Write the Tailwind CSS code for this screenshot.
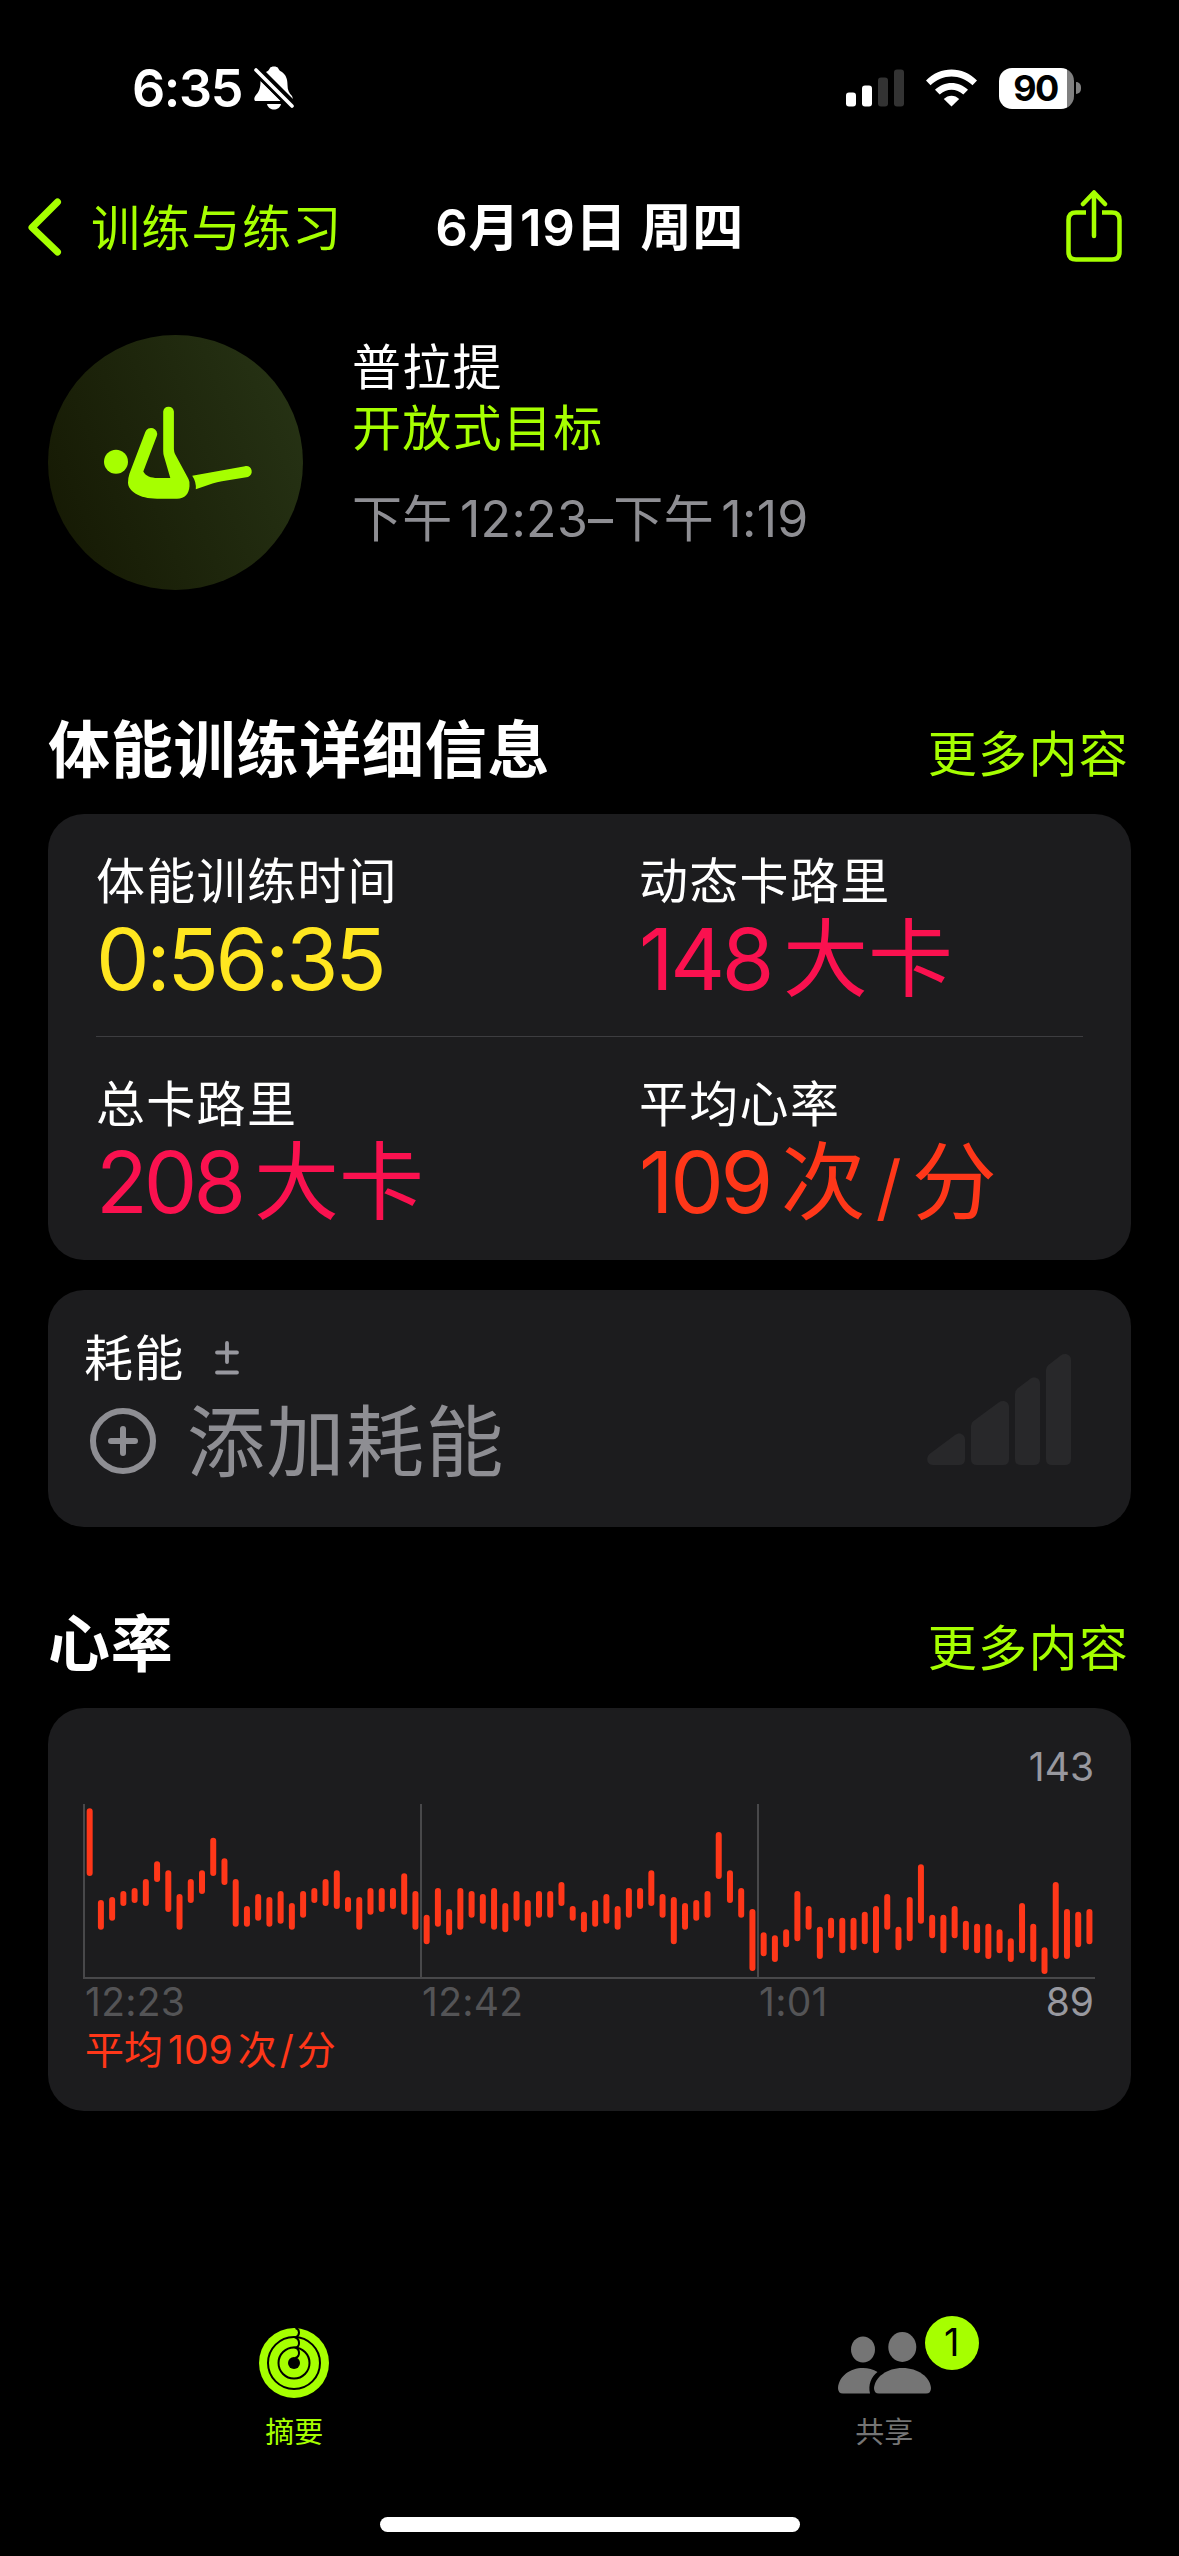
<!DOCTYPE html>
<html lang="zh-CN">
<head>
  <meta charset="UTF-8">
  <title>体能训练</title>
  <script src="https://cdn.jsdelivr.net/npm/@tailwindcss/browser@4"></script>
</head>
<body class="bg-black text-white font-['Inter','Noto_Sans_CJK_SC',sans-serif] w-[1179px] h-[2556px] overflow-hidden flex flex-col">

  <!-- Status bar -->
  <div class="h-44 shrink-0 flex items-center justify-between pl-[132px] pr-[98px]">
    <div class="flex items-center gap-[11px]">
      <span class="text-[52px] leading-[54px] pt-[2px] font-semibold tracking-[-1.4px] w-[111px] whitespace-nowrap">6:35</span>
      <svg class="w-10 h-11" viewBox="0 0 40 44" fill="#fff">
        <path d="M12 6C14 5 15 4 16 2C17 0 23 0 24 2C25 4 26 5 28 6C32 9 33.500 13 33.500 19C33.500 24 35 27 38 30L39 33Z"/>
        <path d="M6.500 15L27 35H2C-.5 35 0 31 2 29C5 26 6.500 22 6.500 15Z"/>
        <path d="M13 38H27C26 42 23 43.500 20 43.500S14 42 13 38Z"/>
        <path d="M2 4L38 40" stroke="#000" stroke-width="9"/>
        <path d="M2 4L38 40" stroke="#fff" stroke-width="3.600" stroke-linecap="round"/>
      </svg>
    </div>
    <div class="flex items-center">
      <svg class="w-[58px] h-[38px]" viewBox="0 0 58 38">
        <rect x="0" y="23.500" width="10" height="14" rx="3" fill="#fff"/>
        <rect x="16" y="16.500" width="10" height="21" rx="3" fill="#fff"/>
        <rect x="32" y="8.500" width="10" height="29" rx="3" fill="#333"/>
        <rect x="48" y="0.500" width="10" height="37" rx="3" fill="#333"/>
      </svg>
      <svg class="w-[51px] h-[38px] ml-[22px]" viewBox="0 0 51 38" fill="#fff">
        <path d="M0 11.500C14-3.300 37-3.300 51 11.500L46.500 16.200C34.500 4.500 16.500 4.500 4.500 16.200Z"/>
        <path d="M9 20.800C18 11.600 33 11.600 42 20.800L37.300 25.600C30.500 19 20.500 19 13.700 25.600Z"/>
        <path d="M17.800 30C22 25.500 29 25.500 33.200 30L25.500 37.500Z"/>
      </svg>
      <div class="flex items-center ml-[22px] gap-[2px]">
        <div class="w-[75px] h-[41px] rounded-[13px] bg-[linear-gradient(to_right,#fff_68px,#808080_68px)] text-black text-[36px] leading-[41px] font-bold tracking-[-1.5px] pr-[2px] text-center">90</div>
        <div class="w-[5px] h-3 rounded-r-full bg-[#808080]"></div>
      </div>
    </div>
  </div>

  <!-- Navigation -->
  <div class="h-[102px] shrink-0 grid grid-cols-[1fr_auto_1fr] items-center px-7">
    <div class="flex items-center text-[#a6ff00] text-[49px] leading-none tracking-[1.300px]">
      <svg class="w-[34px] h-[58px] mr-[29px]" viewBox="0 0 34 58" fill="none" stroke="#a6ff00" stroke-width="7" stroke-linecap="round" stroke-linejoin="round">
        <path d="M29.500 4L4 29.500L29.500 54"/>
      </svg>
      <span class="pt-[2px]">训练与练习</span>
    </div>
    <h1 class="text-[51px] leading-none font-semibold tracking-[.6px] whitespace-pre">6月19日 周四</h1>
    <svg class="w-[58px] h-[74px] justify-self-end mr-7" viewBox="0 0 58 74" fill="none" stroke="#a6ff00" stroke-width="4.500">
      <path d="M21 22.500H11Q3.500 22.500 3.500 30V62Q3.500 69.500 11 69.500H47Q54.500 69.500 54.500 62V30Q54.500 22.500 47 22.500H37"/>
      <path d="M29 46V3M18 14L29 2.500L40 14" stroke-linecap="round" stroke-linejoin="round"/>
    </svg>
  </div>

  <!-- Workout summary -->
  <div class="mt-[57px] ml-12 h-[255px] shrink-0 flex">
    <svg class="w-[255px] h-[255px]" viewBox="0 0 255 255">
      <defs>
        <linearGradient id="disc" x1="0" y1=".7" x2="1" y2=".3">
          <stop offset="0" stop-color="#161a04"/>
          <stop offset="1" stop-color="#263214"/>
        </linearGradient>
      </defs>
      <circle cx="127.500" cy="127.500" r="127.500" fill="url(#disc)"/>
      <g fill="#a6ff00">
        <circle cx="68" cy="126.700" r="12"/>
        <path d="M115.200 76.500A5.400 5.400 0 0 1 125.900 76.500V114Q126 116.500 127 119L140.500 144Q142 147 141.500 151C141 159 137 163.700 129 163.700H109C91 163.700 80 156 80 147.500Q80 143 81.500 138.500L97.300 97A5.900 5.900 0 0 1 108.800 101L95.300 136.500C97.500 141 103 143 109.500 143H122.300L115.900 121Q115.200 118.500 115.200 116Z"/>
        <path d="M144.200 140.700L197 131.200C204 130 206.500 139.500 200 141.900L174 146.200Q169 147 164.500 148.600L147.800 154.300Q148.500 147 144.200 140.700Z"/>
      </g>
    </svg>
    <div class="ml-[49px] pt-[2px] text-[49px] tracking-[1.300px]">
      <div class="leading-[61px]">普拉提</div>
      <div class="leading-[61px] text-[#a6ff00]">开放式目标</div>
      <div class="mt-[30px] leading-[61px] text-[#8e8e93] text-[50px] tracking-[.3px] [word-spacing:-7px] whitespace-nowrap">下午 12:23–下午 1:19</div>
    </div>
  </div>

  <!-- Workout details -->
  <div class="mt-[125px] h-[70px] shrink-0 flex items-center justify-between pl-12 pr-[50px]">
    <h2 class="text-[62px] leading-[70px] font-bold tracking-[.8px] pt-px">体能训练详细信息</h2>
    <a class="text-[49px] leading-[70px] tracking-[1.300px] text-[#a6ff00] pt-[9px]">更多内容</a>
  </div>
  <div class="mt-[29px] mx-12 h-[446px] shrink-0 rounded-[36px] bg-[#1c1c1e] px-12">
    <div class="grid grid-cols-[543px_1fr] h-[223px] pt-[38px] border-b border-[#3d3d40]">
      <div>
        <div class="text-[49px] leading-[60px] tracking-[1.300px]">体能训练时间</div>
        <div class="text-[85px] leading-[95px] tracking-[-3.4px] text-[#ffe620]">0:56:35</div>
      </div>
      <div>
        <div class="text-[49px] leading-[60px] tracking-[1.300px]">动态卡路里</div>
        <div class="text-[85px] leading-[95px] text-[#fa114f]"><span class="tracking-[-3.4px]">148</span><span class="ml-3">大卡</span></div>
      </div>
    </div>
    <div class="grid grid-cols-[543px_1fr] h-[223px] pt-[38px]">
      <div>
        <div class="text-[49px] leading-[60px] tracking-[1.300px]">总卡路里</div>
        <div class="text-[85px] leading-[95px] text-[#fa114f]"><span class="tracking-[-4px]">208</span><span class="ml-3">大卡</span></div>
      </div>
      <div>
        <div class="text-[49px] leading-[60px] tracking-[1.300px]">平均心率</div>
        <div class="text-[85px] leading-[95px] text-[#ff3719]"><span class="tracking-[-3.4px]">109</span><span class="ml-[11px]">次</span><span class="text-[72px] mx-2.5">/</span><span>分</span></div>
      </div>
    </div>
  </div>

  <!-- Effort -->
  <div class="mt-[30px] mx-12 h-[237px] shrink-0 rounded-[36px] bg-[#1c1c1e] pl-9 pr-[60px] flex items-center justify-between">
    <div>
      <div class="flex items-center gap-[30px] text-[49px] leading-[64px] tracking-[1.300px]">
        <span class="pt-[2px]">耗能</span>
        <svg class="w-6 h-[34px]" viewBox="0 0 24 34" stroke="#98989f" stroke-width="3.800" stroke-linecap="round">
          <path d="M12 2V21M2 11.500H22M2 31.500H22"/>
        </svg>
      </div>
      <div class="flex items-center text-[#8e8e93]">
        <svg class="w-[68px] h-[68px] ml-[5px] mr-[30px]" viewBox="0 0 68 68" fill="none" stroke="#8e8e93" stroke-width="6" stroke-linecap="round">
          <circle cx="34" cy="33" r="30"/>
          <path d="M34 21V45M22 33H46"/>
        </svg>
        <span class="text-[78px] leading-[100px] tracking-[1.500px] pt-[2px]">添加耗能</span>
      </div>
    </div>
    <svg class="w-36 h-28" viewBox="0 0 144 112" fill="#28282a">
      <path d="M2.500 101L28 82C32 78.500 38 81 38 86.500V106Q38 112 32 112H6C0 112-1.500 105 2.500 101Z"/>
      <path d="M46.500 68L72 49.300C76 46.300 82 48.500 82 54V106Q82 112 76 112H50Q44 112 44 106V73Q44 70 46.500 68Z"/>
      <path d="M90.500 35.500L103 26C107 23 113 25 113 30.500V106Q113 112 107 112H94Q88 112 88 106V41Q88 37.500 90.500 35.500Z"/>
      <path d="M121.500 12L134 2.300C138-.7 144 1.500 144 7V106Q144 112 138 112H125Q119 112 119 106V17Q119 14 121.500 12Z"/>
    </svg>
  </div>

  <!-- Heart rate -->
  <div class="mt-[82px] h-[70px] shrink-0 flex items-center justify-between pl-12 pr-[50px]">
    <h2 class="text-[62px] leading-[70px] font-bold tracking-[.8px] pt-px">心率</h2>
    <a class="text-[49px] leading-[70px] tracking-[1.300px] text-[#a6ff00] pt-[9px]">更多内容</a>
  </div>
  <div class="mt-[29px] mx-12 h-[403px] shrink-0 rounded-[36px] bg-[#1c1c1e] pt-9 pl-[35px] pr-9 text-[39px] leading-[46px]">
    <div class="text-right text-[#98989f] pr-px">143</div>
    <svg id="chart" class="mt-[14px] w-[1012px] h-[175px]" viewBox="0 222 3036 525">
      <path d="M3 222V744M1014 222V744M2025 222V744M0 744H3036" stroke="#48484a" stroke-width="6"/>
      <path id="bars" stroke="#ff3719" stroke-width="18" stroke-linecap="round"/>
    </svg>
    <div class="grid grid-cols-[337px_337px_1fr_auto] pl-[2px] pr-px text-[#545456]">
      <span class="tracking-[.3px]">12:23</span>
      <span class="tracking-[.3px]">12:42</span>
      <span class="tracking-[.3px]">1:01</span>
      <span class="text-[#98989f]">89</span>
    </div>
    <div class="pl-[2px] mt-[2px] text-[#ff3719] flex">平均<span class="ml-[5px]">109</span><span class="ml-[5px]">次</span><span class="mx-[3px]">/</span>分</div>
  </div>

  <!-- Tab bar -->
  <div class="mt-auto h-[240px] shrink-0 grid grid-cols-2 text-[29px] leading-9">
    <div class="flex flex-col items-center pt-3 pr-px text-[#a6ff00]">
      <svg class="w-[70px] h-[70px]" viewBox="0 0 70 70" fill="none">
        <circle cx="35" cy="35" r="35" fill="#a6ff00"/>
        <circle cx="35" cy="35" r="26" stroke="#000" stroke-width="2"/>
        <circle cx="35" cy="35" r="15.500" stroke="#000" stroke-width="2"/>
        <circle cx="35" cy="35" r="6" fill="#000"/>
        <path d="M36.500 0Q40 1 40 4.500T36.500 9.500Q40 11 40 15T36.500 19.500Q40 21 40 25T36 30" stroke="#000" stroke-width="2"/>
      </svg>
      <span class="mt-[17px]">摘要</span>
    </div>
    <div class="flex flex-col items-center pt-3 text-[#757575]">
      <div class="relative w-[93px] h-[70px]">
        <svg class="w-[93px] h-[70px]" viewBox="0 0 93 70" fill="#757575">
          <ellipse cx="25" cy="21.500" rx="12" ry="13"/>
          <ellipse cx="64.300" cy="19" rx="14" ry="15"/>
          <path d="M5 65.500Q0 65.500 0 60C1 48 12 40 25 40Q33 40 39.500 44C33 49 30 57 32 65.500Z"/>
          <path d="M41 65.500Q36 65.500 36 60C37 49 49 40 64.500 40S92 49 93 60Q93 65.500 88 65.500Z"/>
        </svg>
        <div class="absolute left-[87px] top-[-12px] w-[54px] h-[54px] rounded-full bg-[#a6ff00] text-black text-[38px] leading-[53px] text-center">1</div>
      </div>
      <span class="mt-[17px]">共享</span>
    </div>
  </div>
  <div class="absolute left-[380px] top-[2517px] w-[420px] h-[15px] rounded-full bg-white"></div>

  <script>
    // [top, bottom] of every heart rate bar, in chart units
    const samples = [
      [235,438],[510,599],[501,572],[483,528],[474,519],[447,528],[394,456],[421,546],[492,599],[447,519],
      [421,492],[323,438],[385,465],[447,590],[528,590],[492,572],[501,590],[483,581],[519,599],[483,563],
      [474,519],[447,528],[421,537],[501,546],[501,599],[474,554],[474,546],[474,537],[430,554],[483,599],
      [554,643],[474,590],[537,616],[474,599],[483,563],[492,581],[474,599],[519,607],[483,572],[510,590],
      [483,563],[483,563],[456,528],[528,572],[545,607],[510,590],[492,581],[528,599],[474,563],[474,537],
      [421,528],[492,563],[501,643],[519,599],[510,572],[483,563],[306,447],[421,519],[474,563],[537,723],
      [607,679],[616,696],[598,652],[483,634],[528,599],[590,687],[563,625],[563,670],[563,661],[545,643],
      [528,670],[492,599],[590,661],[501,634],[403,581],[554,625],[554,670],[528,625],[572,661],[581,670],
      [581,687],[598,670],[625,696],[519,670],[581,696],[652,732],[456,687],[537,687],[545,652],[537,643]
    ];
    const d = samples.map(([top, bottom], i) => `M${20 + i * 33.7} ${top + 9}V${bottom - 9}`).join('');
    document.getElementById('bars').setAttribute('d', d);
  </script>
</body>
</html>
